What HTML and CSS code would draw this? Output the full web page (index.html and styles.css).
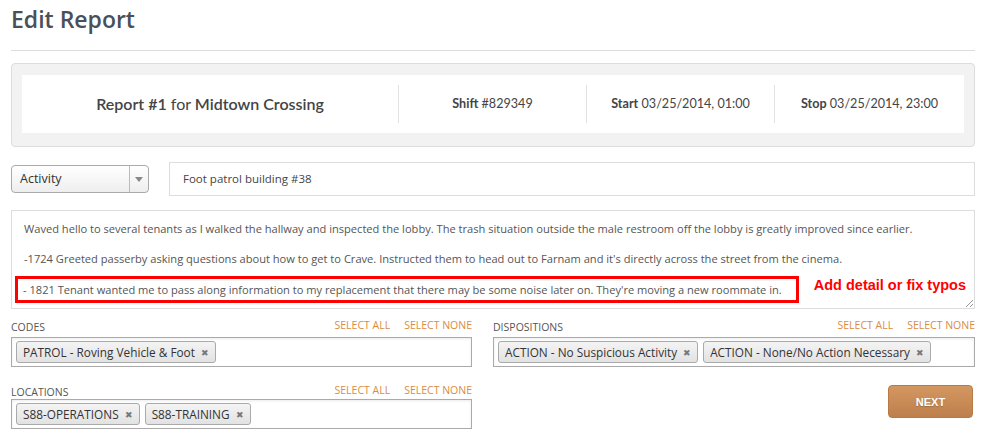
FILE: index.html
```html
<!DOCTYPE html>
<html lang="en">
<head>
    <meta charset="UTF-8">
    <meta name="viewport" content="width=device-width, initial-scale=1.0">
    <title>Edit Report</title>
    <link rel="stylesheet" href="styles.css">
</head>
<body>
    <div class="page">
        <h1 class="title">Edit Report</h1>

        <div class="summary">
            <div class="summary-inner">
                <div class="cell cell-main"><b>Report #1</b> for <b>Midtown Crossing</b></div>
                <div class="cell"><b>Shift</b> #829349</div>
                <div class="cell"><b>Start</b> 03/25/2014, 01:00</div>
                <div class="cell"><b>Stop</b> 03/25/2014, 23:00</div>
            </div>
        </div>

        <div class="entry-row">
            <div class="select">
                <span class="select-value">Activity</span>
                <span class="select-arrow"></span>
            </div>
            <div class="subject">Foot patrol building #38</div>
        </div>

        <div class="notes">
            <p>Waved hello to several tenants as I walked the hallway and inspected the lobby. The trash situation outside the male restroom off the lobby is greatly improved since earlier.</p>
            <p>-1724 Greeted passerby asking questions about how to get to Crave. Instructed them to head out to Farnam and it's directly across the street from the cinema.</p>
            <div class="note-edit">
                <span class="highlight">- 1821 Tenant wanted me to pass along information to my replacement that there may be some noise later on. They're moving a new roommate in.</span>
                <span class="hint">Add detail or fix typos</span>
            </div>
            <span class="grip"></span>
        </div>

        <div class="fields">
            <div class="field">
                <div class="field-head">
                    <span class="field-label">Codes</span>
                    <span class="field-links"><a>Select all</a><a>Select none</a></span>
                </div>
                <div class="tag-box">
                    <span class="tag">PATROL - Roving Vehicle &amp; Foot <i class="tag-x">&#x2716;</i></span>
                </div>
            </div>
            <div class="field">
                <div class="field-head">
                    <span class="field-label">Dispositions</span>
                    <span class="field-links"><a>Select all</a><a>Select none</a></span>
                </div>
                <div class="tag-box">
                    <span class="tag">ACTION - No Suspicious Activity <i class="tag-x">&#x2716;</i></span>
                    <span class="tag">ACTION - None/No Action Necessary <i class="tag-x">&#x2716;</i></span>
                </div>
            </div>
            <div class="field">
                <div class="field-head field-head-low">
                    <span class="field-label">Locations</span>
                    <span class="field-links"><a>Select all</a><a>Select none</a></span>
                </div>
                <div class="tag-box">
                    <span class="tag">S88-OPERATIONS <i class="tag-x">&#x2716;</i></span>
                    <span class="tag">S88-TRAINING <i class="tag-x">&#x2716;</i></span>
                </div>
            </div>
            <div class="actions">
                <button class="btn-next">NEXT</button>
            </div>
        </div>
    </div>
</body>
</html>
```

FILE: styles.css
```css
body {
    margin: 0;
    background: #fff;
    font-family: "Open Sans", Arial, sans-serif;
    color: #555;
}
.page {
    width: 964px;
    padding: 0 11px;
}
.title {
    margin: 0;
    padding: 3px 0 15px;
    font-family: "Open Sans", Arial, sans-serif;
    font-size: 23px;
    font-weight: 600;
    line-height: 32px;
    color: #4b5058;
    border-bottom: 1px solid #ddd;
}
.summary {
    margin-top: 12px;
    padding: 11px 10px 13px;
    background: #f2f2f2;
    border: 1px solid #dcdcdc;
    border-radius: 4px;
}
.summary-inner {
    display: flex;
    align-items: center;
    height: 58px;
    background: #fff;
    color: #444;
    font-family: Lato, "Open Sans", sans-serif;
    font-size: 12.6px;
}
.summary-inner b {
    font-weight: 700;
}
.cell {
    width: 187px;
    line-height: 38px;
    text-align: center;
    border-left: 1px solid #e2e2e2;
}
.cell:last-child {
    flex: 1;
}
.cell-main {
    width: 376px;
    border-left: none;
    font-size: 16px;
}
.cell-main b {
    font-weight: 600;
}
.entry-row {
    display: flex;
    align-items: center;
    gap: 20px;
    margin-top: 15px;
}
.select {
    display: flex;
    width: 136px;
    height: 26px;
    border: 1px solid #aaa;
    border-radius: 4px;
    background: linear-gradient(#fff, #eee);
    font-size: 12.5px;
    color: #333;
}
.select-value {
    flex: 1;
    padding-left: 8px;
    line-height: 26px;
}
.select-arrow {
    width: 18px;
    border-left: 1px solid #bbb;
    position: relative;
}
.select-arrow::after {
    content: "";
    position: absolute;
    left: 5px;
    top: 11px;
    border: 4px solid transparent;
    border-top: 5px solid #888;
    border-bottom: none;
}
.subject {
    flex: 1;
    height: 32px;
    padding-left: 13px;
    border: 1px solid #ddd;
    font-size: 11.5px;
    line-height: 32px;
    color: #444;
}
.notes {
    position: relative;
    margin-top: 14px;
    padding: 9px 0 5px 3px;
    border: 1px solid #ddd;
    font-size: 11.1px;
    color: #555;
    white-space: nowrap;
}
.notes p {
    margin: 0 0 12px;
    padding-left: 9px;
    line-height: 18px;
}
.notes p + p {
    margin-bottom: 8px;
}
.note-edit {
    display: flex;
    align-items: flex-start;
}
.highlight {
    padding: 1px 14px 1px 5px;
    line-height: 19px;
    border: 3px solid #f00;
}
.hint {
    margin: 1px 0 0 15px;
    font-family: "Liberation Sans", Arial, sans-serif;
    font-size: 14.5px;
    font-weight: bold;
    color: #f00;
}
.grip {
    position: absolute;
    right: 1px;
    bottom: 1px;
    width: 7px;
    height: 7px;
    background: linear-gradient(135deg, transparent 45%, #999 45%, #999 55%, transparent 55%, transparent 75%, #999 75%, #999 85%, transparent 85%);
}
.fields {
    display: grid;
    grid-template-columns: 461px 482px;
    column-gap: 21px;
    margin-top: 11px;
}
.field-head {
    display: flex;
    justify-content: space-between;
    align-items: flex-end;
    height: 17px;
    padding-bottom: 3px;
    box-sizing: border-box;
}
.field-head-low {
    height: 32px;
    padding-bottom: 0;
}
.field-label {
    font-size: 10.5px;
    text-transform: uppercase;
    color: #555;
}
.field-links a {
    margin-left: 14px;
    font-size: 10.5px;
    text-transform: uppercase;
    color: #d98c3f;
}
.tag-box {
    display: flex;
    gap: 5px;
    height: 30px;
    padding: 3px 4px;
    box-sizing: border-box;
    border: 1px solid #aaa;
    box-shadow: inset 0 1px 3px rgba(0, 0, 0, 0.08);
}
.tag {
    display: flex;
    align-items: center;
    padding: 0 6px 0 6px;
    height: 20px;
    border: 1px solid #aaa;
    border-radius: 3px;
    background: linear-gradient(#f4f4f4, #e2e2e2);
    font-size: 11.8px;
    color: #333;
}
.tag-x {
    margin-left: 6px;
    font-style: normal;
    font-size: 9px;
    color: #777;
}
.actions {
    display: flex;
    justify-content: flex-end;
    align-items: flex-start;
    padding: 18px 2px 0 0;
}
.btn-next {
    width: 85px;
    height: 33px;
    border: 1px solid #b77a47;
    border-radius: 4px;
    background: linear-gradient(#d49760, #bd804d);
    font-family: "Liberation Sans", Arial, sans-serif;
    font-size: 11px;
    font-weight: bold;
    color: #fff;
    text-shadow: 0 1px 1px rgba(0, 0, 0, 0.2);
}
```
